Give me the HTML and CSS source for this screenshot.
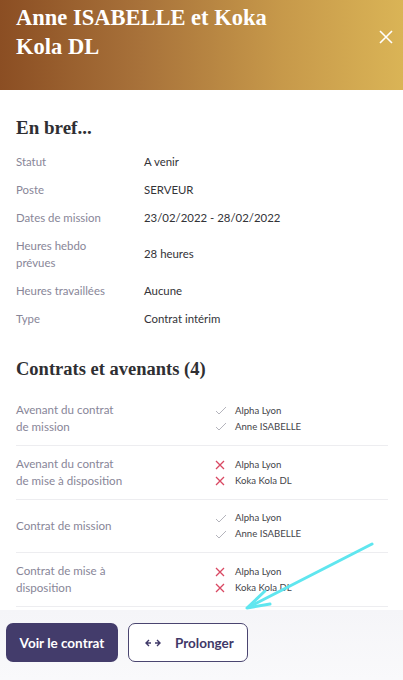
FILE: index.html
```html
<!DOCTYPE html>
<html lang="fr">
<head>
  <meta charset="UTF-8">
  <meta name="viewport" content="width=device-width, initial-scale=1.0">
  <title>Mission</title>
  <link rel="stylesheet" href="styles.css">
</head>
<body>
  <div id="panel">
    <header id="header">
      <h1 class="title">Anne ISABELLE et Koka Kola DL</h1>
      <button class="close-btn" aria-label="Fermer">
        <svg width="14" height="14" viewBox="0 0 14 14"><path d="M1 1L13 13M13 1L1 13" stroke="#fff" stroke-width="1.6" fill="none"/></svg>
      </button>
    </header>

    <section class="section">
      <h2 class="section-title">En bref...</h2>
      <div class="info-row"><div class="label">Statut</div><div class="value">A venir</div></div>
      <div class="info-row"><div class="label">Poste</div><div class="value">SERVEUR</div></div>
      <div class="info-row"><div class="label">Dates de mission</div><div class="value">23/02/2022 - 28/02/2022</div></div>
      <div class="info-row"><div class="label">Heures hebdo<br>prévues</div><div class="value">28 heures</div></div>
      <div class="info-row"><div class="label">Heures travaillées</div><div class="value">Aucune</div></div>
      <div class="info-row"><div class="label">Type</div><div class="value">Contrat intérim</div></div>
    </section>

    <section class="section">
      <h2 class="section-title contracts-title">Contrats et avenants (4)</h2>
      <div id="contractList"></div>
    </section>

    <footer id="footer">
      <button class="btn btn-primary">Voir le contrat</button>
      <button class="btn btn-outline">
        <svg class="swap-icon" width="16" height="8" viewBox="0 0 16 8"><path d="M4 1L1 4L4 7M1 4H6M12 1L15 4L12 7M10 4H15" stroke="#3f3868" stroke-width="1.4" fill="none"/></svg>
        Prolonger
      </button>
    </footer>

    <svg id="annotation" width="403" height="680" viewBox="0 0 403 680">
      <path d="M372 544L249 607" stroke="#5fe6ef" stroke-width="3" stroke-linecap="round" fill="none"/>
      <path d="M265 591L247 608L270 604" stroke="#5fe6ef" stroke-width="3" stroke-linecap="round" stroke-linejoin="round" fill="none"/>
    </svg>
  </div>

  <script>
    const contracts = [
      { label: 'Avenant du contrat<br>de mission', signed: true, names: ['Alpha Lyon', 'Anne ISABELLE'] },
      { label: 'Avenant du contrat<br>de mise à disposition', signed: false, names: ['Alpha Lyon', 'Koka Kola DL'] },
      { label: 'Contrat de mission', signed: true, names: ['Alpha Lyon', 'Anne ISABELLE'] },
      { label: 'Contrat de mise à<br>disposition', signed: false, names: ['Alpha Lyon', 'Koka Kola DL'] }
    ]

    const checkIcon = '<svg width="12" height="9" viewBox="0 0 12 9"><path d="M1 5L4 8L11 1" stroke="#b4b4bc" stroke-width="1" fill="none"/></svg>'
    const crossIcon = '<svg width="10" height="10" viewBox="0 0 10 10"><path d="M1 1L9 9M9 1L1 9" stroke="#d94862" stroke-width="1.3" fill="none"/></svg>'

    function renderContracts() {
      contractList.innerHTML = ''
      contracts.forEach(c => {
        const row = document.createElement('div')
        row.classList.add('contract-row')

        const label = document.createElement('div')
        label.classList.add('label', 'contract-label')
        label.innerHTML = c.label

        const signers = document.createElement('div')
        signers.classList.add('signers')
        c.names.forEach(name => {
          const signer = document.createElement('div')
          signer.classList.add('signer')
          signer.innerHTML = '<span class="signer-icon">' + (c.signed ? checkIcon : crossIcon) + '</span><span>' + name + '</span>'
          signers.appendChild(signer)
        })

        row.append(label, signers)
        contractList.appendChild(row)
      })
    }

    renderContracts()
  </script>
</body>
</html>
```

FILE: styles.css
```css
* {
  box-sizing: border-box;
}
body {
  margin: 0;
  font-family: Lato, "Noto Sans", sans-serif;
  background: #fff;
}
#panel {
  position: relative;
  width: 403px;
  height: 680px;
  overflow: hidden;
}
#header {
  height: 90px;
  display: flex;
  align-items: flex-start;
  justify-content: space-between;
  padding: 3px 10px 0 16px;
  background: linear-gradient(90deg, #8b4e23 0%, #a8723a 35%, #c7994a 70%, #dab456 100%);
}
.title {
  margin: 0;
  width: 260px;
  font-family: "Liberation Serif", serif;
  font-size: 22.5px;
  line-height: 29px;
  font-weight: bold;
  color: #fff;
}
.close-btn {
  margin-top: 27px;
  padding: 0;
  background: none;
  border: none;
  width: 14px;
  height: 14px;
}
.section {
  padding: 0 15px 0 16px;
}
.section-title {
  margin: 26px 0 7px;
  font-family: "Liberation Serif", serif;
  font-size: 19px;
  line-height: 24px;
  font-weight: bold;
  color: #2f2f33;
}
.contracts-title {
  margin: 25px 0 11px;
  font-size: 18.5px;
}
.info-row {
  display: grid;
  grid-template-columns: 128px 1fr;
  align-items: center;
  padding: 5.5px 0;
  font-size: 11.4px;
  line-height: 17px;
}
.label {
  color: #888698;
}
.value {
  color: #333338;
}
.contract-row {
  display: grid;
  grid-template-columns: 199px 1fr;
  align-items: center;
  padding: 10px 0;
  border-bottom: 1px solid #ededf0;
}
.contract-label {
  font-size: 11.6px;
  line-height: 16.5px;
}
.signers {
  font-size: 9.6px;
  line-height: 16px;
  color: #444449;
}
.signer {
  display: flex;
  align-items: center;
}
.signer-icon {
  width: 20px;
  display: flex;
  align-items: center;
}
#footer {
  position: absolute;
  left: 0;
  right: 0;
  bottom: 0;
  height: 70px;
  display: flex;
  align-items: flex-start;
  gap: 10px;
  padding: 13px 6px 0;
  background: linear-gradient(180deg, #f5f5f8 0%, #f9f9fb 100%);
}
.btn {
  height: 39px;
  border-radius: 7px;
  font-family: Lato, "Noto Sans", sans-serif;
  font-size: 13.5px;
  font-weight: bold;
}
.btn-primary {
  width: 112px;
  background: #433c6b;
  border: none;
  color: #fff;
}
.btn-outline {
  width: 120px;
  display: flex;
  align-items: center;
  gap: 14px;
  padding: 0 0 0 16px;
  background: #fff;
  border: 1.5px solid #4a4570;
  color: #3f3868;
}
.swap-icon {
  flex: none;
}
#annotation {
  position: absolute;
  left: 0;
  top: 0;
  pointer-events: none;
}
```
